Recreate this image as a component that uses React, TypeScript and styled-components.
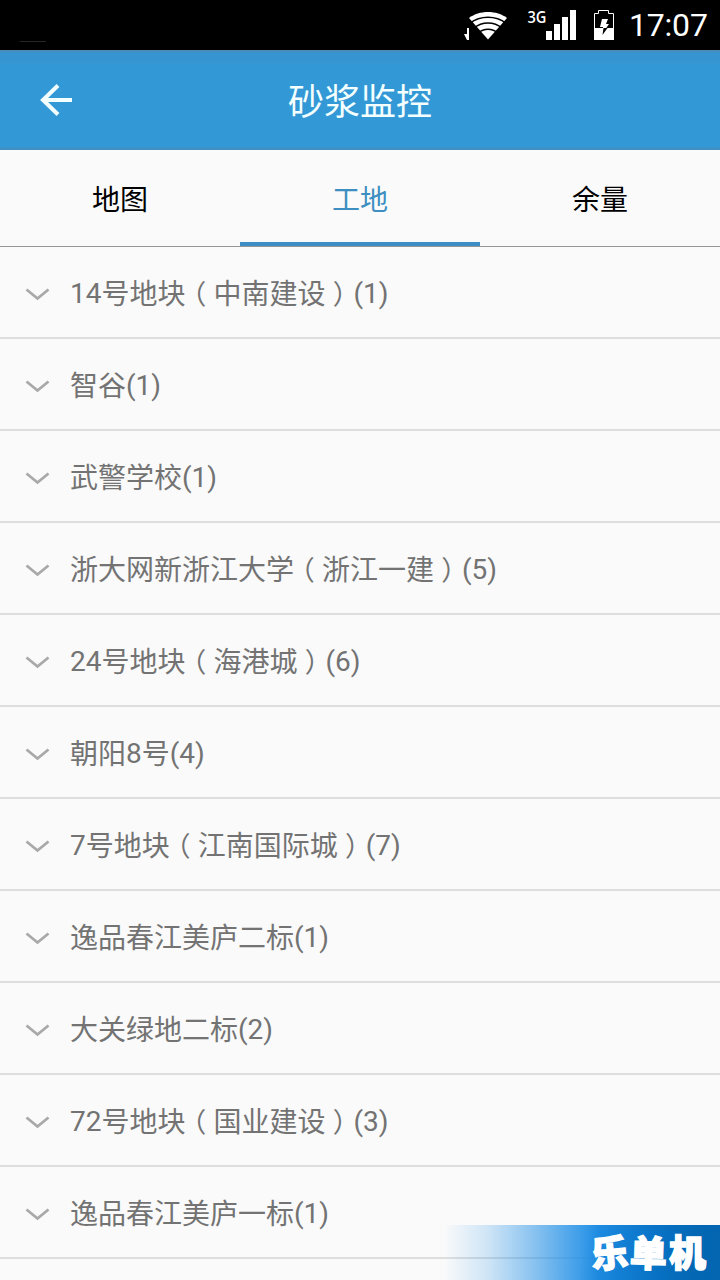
import React from "react";
import styled, { createGlobalStyle } from "styled-components";

const Global = createGlobalStyle`
  * { box-sizing: border-box; }
  body {
    margin: 0;
    background: #fafafa;
    font-family: Roboto, "Noto Sans CJK SC", sans-serif;
  }
`;

const Screen = styled.div`
  position: relative;
  display: flex;
  flex-direction: column;
  width: 720px;
  height: 1280px;
  overflow: hidden;
  background: #fafafa;
`;

const StatusBar = styled.div`
  display: flex;
  flex: none;
  justify-content: space-between;
  height: 50px;
  padding: 0 11px 0 20px;
  background: #000;
`;

const Notice = styled.span`
  align-self: flex-end;
  width: 26px;
  height: 1px;
  margin-bottom: 8px;
  background: #262626;
`;

const StatusItems = styled.div`
  display: flex;
  align-items: center;
`;

const Clock = styled.time`
  width: 80px;
  margin-left: 15px;
  color: #fff;
  font-size: 32px;
  letter-spacing: -0.2px;
  line-height: 50px;
  white-space: nowrap;
`;

const Header = styled.header`
  display: grid;
  flex: none;
  grid-template-columns: 112px 1fr 112px;
  align-items: center;
  height: 100px;
  background: linear-gradient(#5189ae 0, #3694d0 3px, #3694d0 13px, #3399d6 14px, #3399d6 97px, #428fc3 98px);
`;

const BackButton = styled.button`
  display: flex;
  width: 112px;
  height: 100px;
  padding: 32px 38px;
  border: 0;
  background: none;
`;

const Title = styled.h1`
  margin: 0;
  padding-top: 6px;
  color: #f4ffff;
  font-size: 36px;
  font-weight: 400;
  line-height: 52px;
  text-align: center;
`;

const Tabs = styled.nav`
  display: grid;
  flex: none;
  grid-template-columns: repeat(3, 1fr);
  height: 97px;
  border-bottom: 1px solid #969696;
`;

const Tab = styled.button<{ $active?: boolean }>`
  height: 96px;
  padding: 10px 0 0;
  border: 0;
  border-bottom: 4px solid ${(p) => (p.$active ? "#3c8fc4" : "transparent")};
  background: none;
  color: ${(p) => (p.$active ? "#3c8fc0" : "#000")};
  font-family: inherit;
  font-size: 28px;
  line-height: 40px;
`;

const List = styled.ul`
  margin: 0;
  padding: 0;
  list-style: none;
`;

const Row = styled.li`
  display: flex;
  align-items: center;
  height: 92px;
  padding: 4px 0 0 25px;
  border-bottom: 2px solid #dedede;
`;

const Label = styled.span`
  margin-left: 20px;
  padding-top: 2px;
  color: #737373;
  font-size: 28px;
  line-height: 40px;
  white-space: nowrap;
`;

const Latin = styled.span`
  line-height: 36px;
  vertical-align: 1px;
`;

const Paren = styled.span`
  display: inline-block;
  width: 28px;
  font-family: "Noto Sans CJK SC", sans-serif;
  font-feature-settings: "halt";
  font-size: 27px;
  line-height: 36px;
  text-align: center;
`;

const Watermark = styled.div`
  position: absolute;
  right: 0;
  bottom: 0;
  display: flex;
  justify-content: flex-end;
  gap: 2px;
  width: 276px;
  height: 55px;
  padding-right: 14px;
  background:
    linear-gradient(100deg, transparent 50%, rgba(0, 92, 165, 0.65) 90%),
    linear-gradient(90deg, rgba(30, 142, 230, 0) 0, rgba(30, 142, 230, 0.2) 16%, rgba(30, 142, 230, 0.5) 32%, #208fe6 56%, #0d82dc 78%, #0876c5 100%);
`;

const LogoChar = styled.span<{ $tilt: number }>`
  color: #fff;
  font-family: "Noto Sans CJK SC", sans-serif;
  font-size: 37px;
  font-weight: 900;
  line-height: 53px;
  -webkit-text-stroke: 1.4px #fff;
  transform: rotate(${(p) => p.$tilt}deg);
`;

const sites = [
  "14号地块（中南建设）(1)",
  "智谷(1)",
  "武警学校(1)",
  "浙大网新浙江大学（浙江一建）(5)",
  "24号地块（海港城）(6)",
  "朝阳8号(4)",
  "7号地块（江南国际城）(7)",
  "逸品春江美庐二标(1)",
  "大关绿地二标(2)",
  "72号地块（国业建设）(3)",
  "逸品春江美庐一标(1)",
];

// Full-width brackets sit in the middle of their cell; digits ride slightly
// above the Chinese baseline.
const renderName = (name: string) =>
  name.split(/([（）]|[0-9()]+)/).map((part, i) => {
    if (part === "（" || part === "）") return <Paren key={i}>{part}</Paren>;
    if (/^[0-9()]+$/.test(part)) return <Latin key={i}>{part}</Latin>;
    return part;
  });

const StatusIcons = () => (
  <svg width="152" height="50" viewBox="462 0 152 50" fill="none">
    <path d="M467 28h2v12h-2l-3-6h3z" fill="#fff" />
    <path d="M488 39.500L469 18C479 10 497 10 507 18Z" fill="#fff" />
    <g stroke="#000" strokeWidth="1.600">
      <path d="M470 23.200C480 15.200 496 15.200 506 23.200" />
      <path d="M474 28.200C482 21.200 494 21.200 502 28.200" />
      <path d="M478 33C484 28 492 28 498 33" />
    </g>
    <text x="527.500" y="23" fill="#fff" fontFamily="Open Sans" fontWeight="600" fontSize="17" textLength="19" lengthAdjust="spacingAndGlyphs">3G</text>
    <path d="M546 31h6v9h-6zM554 24h6v16h-6zM562 17h6v23h-6zM570 10h6v30h-6z" fill="#fff" />
    <path d="M594.500 39.500v-26h4v-3h10v3h5v26z" stroke="#fff" />
    <path d="M594 28h20v12h-20z" fill="#fff" />
    <path d="M602 19h6l-2 5h3l-7 10 1-7h-3z" fill="#fff" />
    <path d="M600 28h3.500l-1 7 5-7" fill="#000" />
  </svg>
);

const Chevron = () => (
  <svg width="25" height="16" viewBox="0 0 25 16" fill="none">
    <path d="M1.500 3.500L12.500 12.500L23.500 3.500" stroke="#a9a9a9" strokeWidth="2.800" />
  </svg>
);

export default function App() {
  return (
    <>
      <Global />
      <Screen>
        <StatusBar>
          <Notice />
          <StatusItems>
            <StatusIcons />
            <Clock>17:07</Clock>
          </StatusItems>
        </StatusBar>
        <Header>
          <BackButton aria-label="返回">
            <svg width="36" height="36" viewBox="38 82 36 36" fill="none" stroke="#f4ffff" strokeWidth="4">
              <path d="M72 100H43M58 85.500L43 100L58 114.500" />
            </svg>
          </BackButton>
          <Title>砂浆监控</Title>
        </Header>
        <Tabs>
          <Tab>地图</Tab>
          <Tab $active>工地</Tab>
          <Tab>余量</Tab>
        </Tabs>
        <List>
          {sites.map((name) => (
            <Row key={name}>
              <Chevron />
              <Label>{renderName(name)}</Label>
            </Row>
          ))}
        </List>
        <Watermark>
          <LogoChar $tilt={-5}>乐</LogoChar>
          <LogoChar $tilt={2}>单</LogoChar>
          <LogoChar $tilt={0}>机</LogoChar>
        </Watermark>
      </Screen>
    </>
  );
}
